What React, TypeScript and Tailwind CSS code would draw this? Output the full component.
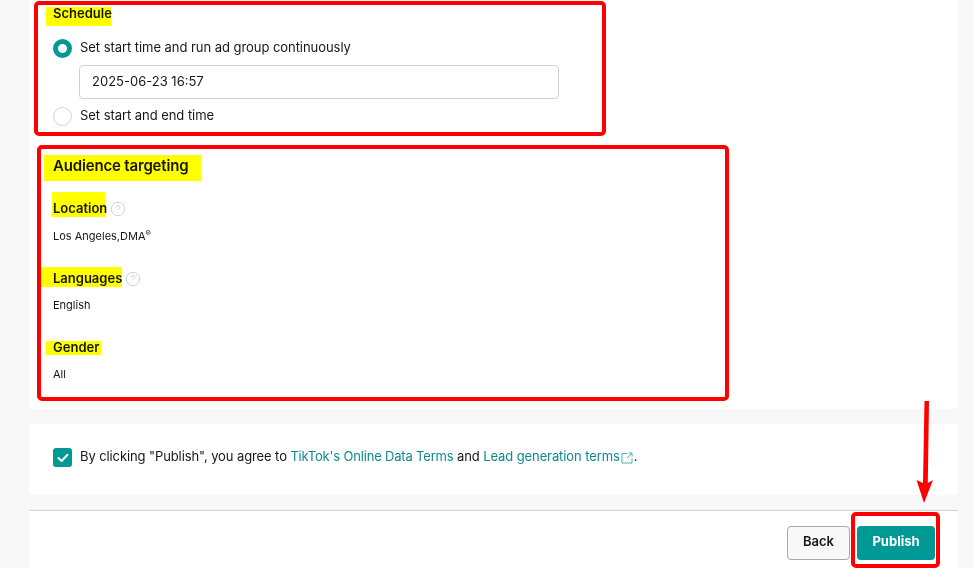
import { CircleHelp } from "lucide-react";

const font = "font-['Inter','Liberation_Sans',sans-serif]";

// Radio: selected one has a thick teal ring
function Radio({ checked, label }: { checked?: boolean; label: string }) {
  return (
    <div className="flex h-5 items-center">
      <span
        className={
          checked
            ? "box-border size-[19px] rounded-full border-[5px] border-[#009995] bg-white"
            : "box-border size-[19px] rounded-full border border-[#d4d4d4] bg-white"
        }
      />
      <span className="ml-2 -mt-0.5 text-[13px] leading-5 tracking-[-0.05px] text-[#16161e]">{label}</span>
    </div>
  );
}

function FieldTitle({ children, help }: { children: string; help?: boolean }) {
  return (
    <div className="flex h-5 items-center text-[13px] leading-5 font-semibold text-[#16161e]">
      {children}
      {help && <CircleHelp className="ml-[3px] mt-0.5 size-4 text-[#d2d2d2]" strokeWidth={1.5} />}
    </div>
  );
}

export default function App() {
  return (
    <div className={`relative h-[568px] w-[973px] overflow-hidden bg-[#f8f8f8] ${font}`}>
      <div className="ml-[29px] w-[929px]">
        {/* Main form card */}
        <div className="h-[409px] rounded-b bg-white pl-6 pt-[3px]">
          <FieldTitle>Schedule</FieldTitle>
          <div className="mt-[15px]">
            <Radio checked label="Set start time and run ad group continuously" />
          </div>
          <div className="ml-[26px] mt-[7px] flex h-[34px] w-[480px] items-center rounded border border-[#d2d2d2] pl-3 text-[13px] text-[#16161e]">
            2025-06-23 16:57
          </div>
          <div className="mt-[7px]">
            <Radio label="Set start and end time" />
          </div>

          <h2 className="mt-7 text-[15px] leading-6 font-semibold tracking-[-0.17px] text-[#16161e]">Audience targeting</h2>

          <div className="mt-5">
            <FieldTitle help>Location</FieldTitle>
            <p className="mt-[10px] text-[11px] leading-4 text-[#16161e]">
              Los Angeles,DMA<sup className="text-[8px] leading-none">®</sup>
            </p>
          </div>
          <div className="mt-6">
            <FieldTitle help>Languages</FieldTitle>
            <p className="mt-[9px] text-[11px] leading-4 text-[#16161e]">English</p>
          </div>
          <div className="mt-6">
            <FieldTitle>Gender</FieldTitle>
            <p className="mt-[9px] text-[11px] leading-4 text-[#16161e]">All</p>
          </div>
        </div>

        {/* Terms card */}
        <div className="mt-[15px] h-[71px] rounded bg-white pl-6 pt-6">
          <div className="flex items-center text-[13px] leading-5 text-[#16161e]">
            <span className="flex size-[19px] items-center justify-center rounded-[3px] bg-[#009995]">
              <svg width="12" height="10" viewBox="0 0 12 10" fill="none">
                <path d="M1.5 5 L4.6 8 L10.5 1.8" stroke="white" strokeWidth="2" strokeLinecap="round" strokeLinejoin="round" />
              </svg>
            </span>
            <span className="ml-2 -mt-1 flex items-center whitespace-pre tracking-[-0.1px]">
              By clicking "Publish", you agree to <span className="tracking-[-0.18px] text-[#0f8a8c]">TikTok's Online Data Terms</span> and{" "}
              <span className="text-[#0f8a8c]">Lead generation terms</span>
              <svg className="mx-px mt-1" width="12" height="12" viewBox="0 0 12 12" fill="none" stroke="#45b3b1" strokeWidth="1">
                <path d="M6 1.5 H1 V11 H11 V6.5" />
                <path d="M7.5 1 H11 V4.5 M11 1 L6 6" />
              </svg>
              .
            </span>
          </div>
        </div>

        {/* Footer with actions */}
        <div className="mt-[15px] h-[58px] border-t border-[#d2d2d2] bg-white pt-[15px]">
          <div className="flex justify-end gap-[7px] pr-[23px]">
            <button className="h-[34px] w-[63px] rounded border border-[#a8a8a8] bg-[#f8f8f8] pb-0.5 text-[13px] font-semibold text-[#16161e]">
              Back
            </button>
            <button className="h-[34px] w-[78px] rounded bg-[#009995] pb-0.5 text-[13px] font-bold text-white">Publish</button>
          </div>
        </div>
      </div>

      {/* Annotations drawn on top of the screenshot */}
      <div className="absolute left-[46px] top-[7px] h-[19px] w-[65px] bg-[#ffff00] mix-blend-multiply" />
      <div className="absolute left-[44px] top-[155px] h-[26px] w-[157px] bg-[#ffff00] mix-blend-multiply" />
      <div className="absolute left-[52px] top-[192px] h-[25px] w-[53px] bg-[#ffff00] mix-blend-multiply" />
      <div className="absolute left-[41px] top-[267px] h-5 w-[81px] bg-[#ffff00] mix-blend-multiply" />
      <div className="absolute left-[46px] top-[341px] h-[14px] w-[55px] bg-[#ffff00] mix-blend-multiply" />

      <div className="absolute left-[34px] top-px h-[135px] w-[572px] rounded-[5px] border-4 border-[#ff0000]" />
      <div className="absolute left-[37px] top-[145px] h-[256px] w-[692px] rounded-[5px] border-4 border-[#ff0000]" />
      <div className="absolute left-[851px] top-[512px] h-14 w-[89px] rounded-[5px] border-4 border-[#ff0000]" />

      <svg className="absolute left-[910px] top-[398px]" width="30" height="110" viewBox="0 0 30 110">
        <path d="M14.5 3 L19 3 L17.8 85 L23 82 L14 105 L6.5 82 L13 85 Z" fill="#ff0000" />
      </svg>
    </div>
  );
}
